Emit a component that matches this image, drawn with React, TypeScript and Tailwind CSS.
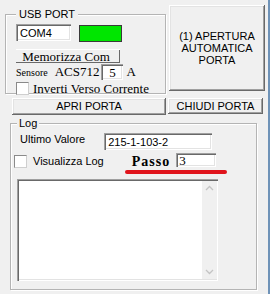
import React from "react";

const btn =
  "flex items-center justify-center bg-[#f0f0f0] shadow-[inset_-1px_-1px_0_#696969,inset_1px_1px_0_#ffffff,inset_-2px_-2px_0_#a0a0a0,inset_2px_2px_0_#e3e3e3]";
const box =
  "bg-white shadow-[inset_1px_1px_0_#a0a0a0,inset_2px_2px_0_#696969,inset_-1px_-1px_0_#ffffff,inset_-2px_-2px_0_#e3e3e3]";
const group =
  "relative border border-[#b4b4b4] shadow-[1px_1px_0_#ffffff,inset_1px_1px_0_#ffffff]";
const sans = "font-['Liberation_Sans',Arial,sans-serif]";
const serif = "font-['Liberation_Serif','Times_New_Roman',serif]";

function Check() {
  return (
    <div className="w-[13px] h-[13px] bg-white border border-[#8a8a8a] border-r-[#cfcfcf] border-b-[#cfcfcf] shrink-0" />
  );
}

export default function App() {
  return (
    <div
      className={`relative w-[270px] h-[294px] bg-[#f0f0f0] overflow-hidden text-black ${sans} text-[11px] leading-none border-r-2 border-[#6f93b8]`}
    >
      {/* top row */}
      <div className="flex items-start pt-[5px] pl-[5px]">
        <div className={`${group} mt-[9px] w-[161px] h-[80px] pl-[10px] pt-[9px]`}>
          <div className="absolute -top-[7px] left-[10px] bg-[#f0f0f0] px-[3px] text-[11px] leading-[12px]">
            USB PORT
          </div>
          <div className="flex items-start">
            <div className={`${box} w-[55px] h-[17px] pl-[4px] pt-[3px] text-[11px] leading-[12px]`}>COM4</div>
            <div className="ml-[8px] mt-[1px] w-[43px] h-[17px] bg-[#00e600] border border-[#3a3a3a]" />
          </div>
          <div
            className={`mt-[7px] w-[104px] h-[14px] ${serif} text-[13px] leading-[14px] bg-[#f0f0f0] border-t border-[#ffffff] shadow-[inset_-1px_-1px_0_#696969] flex justify-center pr-[4px]`}
          >
            Memorizza Com
          </div>
          <div className={`flex items-end ${serif} mt-[1px] h-[16px]`}>
            <span className="text-[10px] leading-[12px] pb-[1px]">Sensore</span>
            <span className="ml-[7px] text-[13px] leading-[14px] pb-[1px]">ACS712</span>
            <div className={`${box} ml-[2px] w-[22px] h-[16px] flex items-center justify-center text-[13px]`}>5</div>
            <span className="ml-[3px] text-[13px] leading-[14px] pb-[1px]">A</span>
          </div>
          <div className={`flex items-center mt-[2px] ${serif}`}>
            <Check />
            <span className="ml-[4px] text-[13px] leading-[13px]">Inverti Verso Corrente</span>
          </div>
        </div>
        <div className={`${btn} ml-[3px] w-[96px] h-[86px] flex-col text-[11px] leading-[12px] text-center`}>
          <span>(1) APERTURA</span>
          <span>AUTOMATICA</span>
          <span>PORTA</span>
        </div>
      </div>

      {/* buttons row */}
      <div className="flex items-start pl-[12px] mt-[4px]">
        <div className={`${btn} w-[154px] h-[17px]`}>APRI PORTA</div>
        <div className={`${btn} ml-[2px] w-[95px] h-[16px]`}>CHIUDI PORTA</div>
      </div>

      {/* log group */}
      <div className={`${group} ml-[10px] mt-[8px] w-[247px] h-[167px]`}>
        <div className="absolute -top-[7px] left-[6px] bg-[#f0f0f0] px-[2px] leading-[12px]">Log</div>
        <div className="flex items-start pt-[9px] pl-[9px]">
          <span className="mt-[0px] leading-[12px]">Ultimo Valore</span>
          <div className={`${box} ml-[19px] w-[108px] h-[17px] pl-[4px] pt-[3px] leading-[12px]`}>215-1-103-2</div>
        </div>
        <div className="flex items-start pl-[3px] mt-[3px]">
          <div className="mt-[2px]"><Check /></div>
          <span className="ml-[6px] mt-[2px] leading-[12px]">Visualizza Log</span>
          <span className={`ml-[28px] mt-[2px] ${serif} font-semibold text-[14px] leading-[14px] tracking-[1px]`}>Passo</span>
          <div className={`${box} ml-[6px] w-[40px] h-[14px] pl-[3px] pt-[1px] ${serif} text-[13px] leading-[13px]`}>3</div>
        </div>
        <div className="ml-[114px] mt-[1px] w-[102px] h-[4px] rounded-full bg-[#e0141c]" />
        <div className={`${box} ml-[6px] mt-[5px] w-[201px] h-[102px] flex justify-end p-[2px] pr-[1px]`}>
          <div className="w-[15px] h-full bg-[#f0f0f0] flex flex-col justify-between items-center py-[4px]">
            <svg width="9" height="6" viewBox="0 0 9 6">
              <path d="M1 5 L4.5 1.5 L8 5" fill="none" stroke="#c4c4c4" strokeWidth="1.3" />
            </svg>
            <svg width="9" height="6" viewBox="0 0 9 6">
              <path d="M1 1 L4.5 4.5 L8 1" fill="none" stroke="#c4c4c4" strokeWidth="1.3" />
            </svg>
          </div>
        </div>
      </div>
    </div>
  );
}
